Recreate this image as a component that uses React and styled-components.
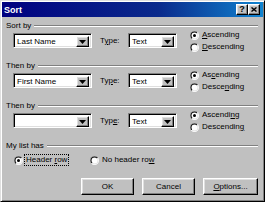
import React from "react";
import styled, { createGlobalStyle } from "styled-components";

const GlobalStyle = createGlobalStyle`
  html, body {
    margin: 0;
    padding: 0;
    background: #c0c0c0;
  }
  body {
    font-family: "Liberation Sans", Arial, sans-serif;
    font-size: 8px;
    color: #000;
  }
`;

const raised = `
  background: #c0c0c0;
  border: 1px solid;
  border-color: #fff #000 #000 #fff;
  box-shadow: inset -1px -1px #808080, inset 1px 1px #dfdfdf;
`;

const Window = styled.div`
  width: 265px;
  height: 202px;
  box-sizing: border-box;
  background: #c0c0c0;
  border: 1px solid;
  border-color: #dfdfdf #000 #000 #dfdfdf;
  box-shadow: inset 1px 1px #fff, inset -1px -1px #808080;
  padding: 1px;
  display: flex;
  flex-direction: column;
`;

const TitleBar = styled.div`
  height: 15px;
  display: flex;
  align-items: center;
  padding: 0 3px 0 2px;
  background: linear-gradient(90deg, #000080 0%, #0a2a8c 60%, #1084d0 100%);
`;

const Title = styled.div`
  flex: 1;
  color: #fff;
  font-weight: bold;
  font-size: 9px;
`;

const CaptionButton = styled.div`
  ${raised}
  width: 10px;
  height: 9px;
  display: flex;
  align-items: center;
  justify-content: center;
  font-weight: bold;
  font-size: 9px;
  line-height: 9px;
`;

const Body = styled.div`
  padding: 5px 5px 0 4px;
  display: flex;
  flex-direction: column;
`;

const Group = styled.div`
  height: ${(p) => p.$height || 40}px;
`;

const Legend = styled.div`
  height: 8px;
  display: flex;
  align-items: center;
  line-height: 8px;
`;

const Etch = styled.div`
  flex: 1;
  margin-left: 3px;
  height: 0;
  border-top: 1px solid #808080;
  border-bottom: 1px solid #fff;
`;

const Row = styled.div`
  display: flex;
  align-items: flex-start;
  padding-left: 7px;
`;

const Field = styled.div`
  width: ${(p) => p.$width}px;
  height: 15px;
  margin-top: 3px;
  box-sizing: border-box;
  background: #fff;
  border: 1px solid;
  border-color: #808080 #fff #fff #808080;
  box-shadow: inset 1px 1px #000, inset -1px -1px #dfdfdf;
  padding: 2px;
  display: flex;
`;

const FieldValue = styled.div`
  flex: 1;
  line-height: 11px;
  padding-left: 1px;
  white-space: nowrap;
  overflow: hidden;
`;

const DropButton = styled.div`
  ${raised}
  width: 11px;
  height: 9px;
  display: flex;
  align-items: center;
  justify-content: center;
`;

const TypeLabel = styled.div`
  width: 28px;
  margin-left: 8px;
  margin-top: 3px;
  line-height: 15px;
`;

const RadioColumn = styled.div`
  margin-left: 13px;
  margin-top: -1px;
  display: flex;
  flex-direction: column;
`;

const Option = styled.div`
  height: 12px;
  width: ${(p) => (p.$width ? `${p.$width}px` : "auto")};
  display: flex;
  align-items: center;
  gap: 2px;
  white-space: nowrap;
`;

const OptionText = styled.span`
  line-height: 10px;
  padding: 0 1px;
  outline: ${(p) => (p.$focus ? "1px dotted #000" : "none")};
`;

const HeaderRow = styled.div`
  display: flex;
  margin-top: 4px;
  padding-left: 8px;
`;

const ButtonRow = styled.div`
  display: flex;
  justify-content: flex-end;
  gap: 8px;
  margin-top: 12px;
`;

const PushButton = styled.div`
  ${raised}
  width: ${(p) => p.$width || 53}px;
  height: 17px;
  box-sizing: border-box;
  display: flex;
  align-items: center;
  justify-content: center;
`;

const Arrow = () => (
  <svg width="7" height="4" viewBox="0 0 7 4">
    <path d="M0 0H7L3.5 4Z" fill="#000" />
  </svg>
);

const CloseGlyph = () => (
  <svg width="6" height="5" viewBox="0 0 6 5">
    <path d="M0.5 0.5L5.5 4.5M5.5 0.5L0.5 4.5" stroke="#000" strokeWidth="1.4" />
  </svg>
);

const Radio = ({ checked }) => (
  <svg width="9" height="9" viewBox="0 0 12 12">
    <defs>
      <linearGradient id="radio-out" x1="0" y1="0" x2="1" y2="1">
        <stop offset="0.5" stopColor="#808080" />
        <stop offset="0.5" stopColor="#fff" />
      </linearGradient>
      <linearGradient id="radio-in" x1="0" y1="0" x2="1" y2="1">
        <stop offset="0.5" stopColor="#000" />
        <stop offset="0.5" stopColor="#dfdfdf" />
      </linearGradient>
    </defs>
    <circle cx="6" cy="6" r="6" fill="url(#radio-out)" />
    <circle cx="6" cy="6" r="5" fill="url(#radio-in)" />
    <circle cx="6" cy="6" r="4" fill="#fff" />
    {checked && <circle cx="6" cy="6" r="2" fill="#000" />}
  </svg>
);

const Select = ({ width, value }) => (
  <Field $width={width}>
    <FieldValue>{value}</FieldValue>
    <DropButton>
      <Arrow />
    </DropButton>
  </Field>
);

const keyed = (text, index) => (
  <>
    {text.slice(0, index)}
    <u>{text[index]}</u>
    {text.slice(index + 1)}
  </>
);

const sortGroups = [
  { label: "Sort by", value: "Last Name", type: 1, asc: 0, desc: 0 },
  { label: "Then by", value: "First Name", type: 2, asc: 2, desc: 5 },
  { label: "Then by", value: "", type: 3, asc: 7, desc: 9 },
];

export default function App() {
  return (
    <>
      <GlobalStyle />
      <Window>
        <TitleBar>
          <Title>Sort</Title>
          <CaptionButton>?</CaptionButton>
          <CaptionButton>
            <CloseGlyph />
          </CaptionButton>
        </TitleBar>
        <Body>
          {sortGroups.map((g, i) => (
            <Group key={i}>
              <Legend>
                {g.label}
                <Etch />
              </Legend>
              <Row>
                <Select width={79} value={g.value} />
                <TypeLabel>{keyed("Type:", g.type)}</TypeLabel>
                <Select width={49} value="Text" />
                <RadioColumn>
                  <Option>
                    <Radio checked />
                    <OptionText>{keyed("Ascending", g.asc)}</OptionText>
                  </Option>
                  <Option>
                    <Radio />
                    <OptionText>{keyed("Descending", g.desc)}</OptionText>
                  </Option>
                </RadioColumn>
              </Row>
            </Group>
          ))}
          <Group $height={36}>
            <Legend>
              My list has
              <Etch />
            </Legend>
            <HeaderRow>
              <Option $width={76}>
                <Radio checked />
                <OptionText $focus>{keyed("Header row", 7)}</OptionText>
              </Option>
              <Option>
                <Radio />
                <OptionText>{keyed("No header row", 12)}</OptionText>
              </Option>
            </HeaderRow>
            <ButtonRow>
              <PushButton>OK</PushButton>
              <PushButton>Cancel</PushButton>
              <PushButton $width={55}>{keyed("Options...", 0)}</PushButton>
            </ButtonRow>
          </Group>
        </Body>
      </Window>
    </>
  );
}
